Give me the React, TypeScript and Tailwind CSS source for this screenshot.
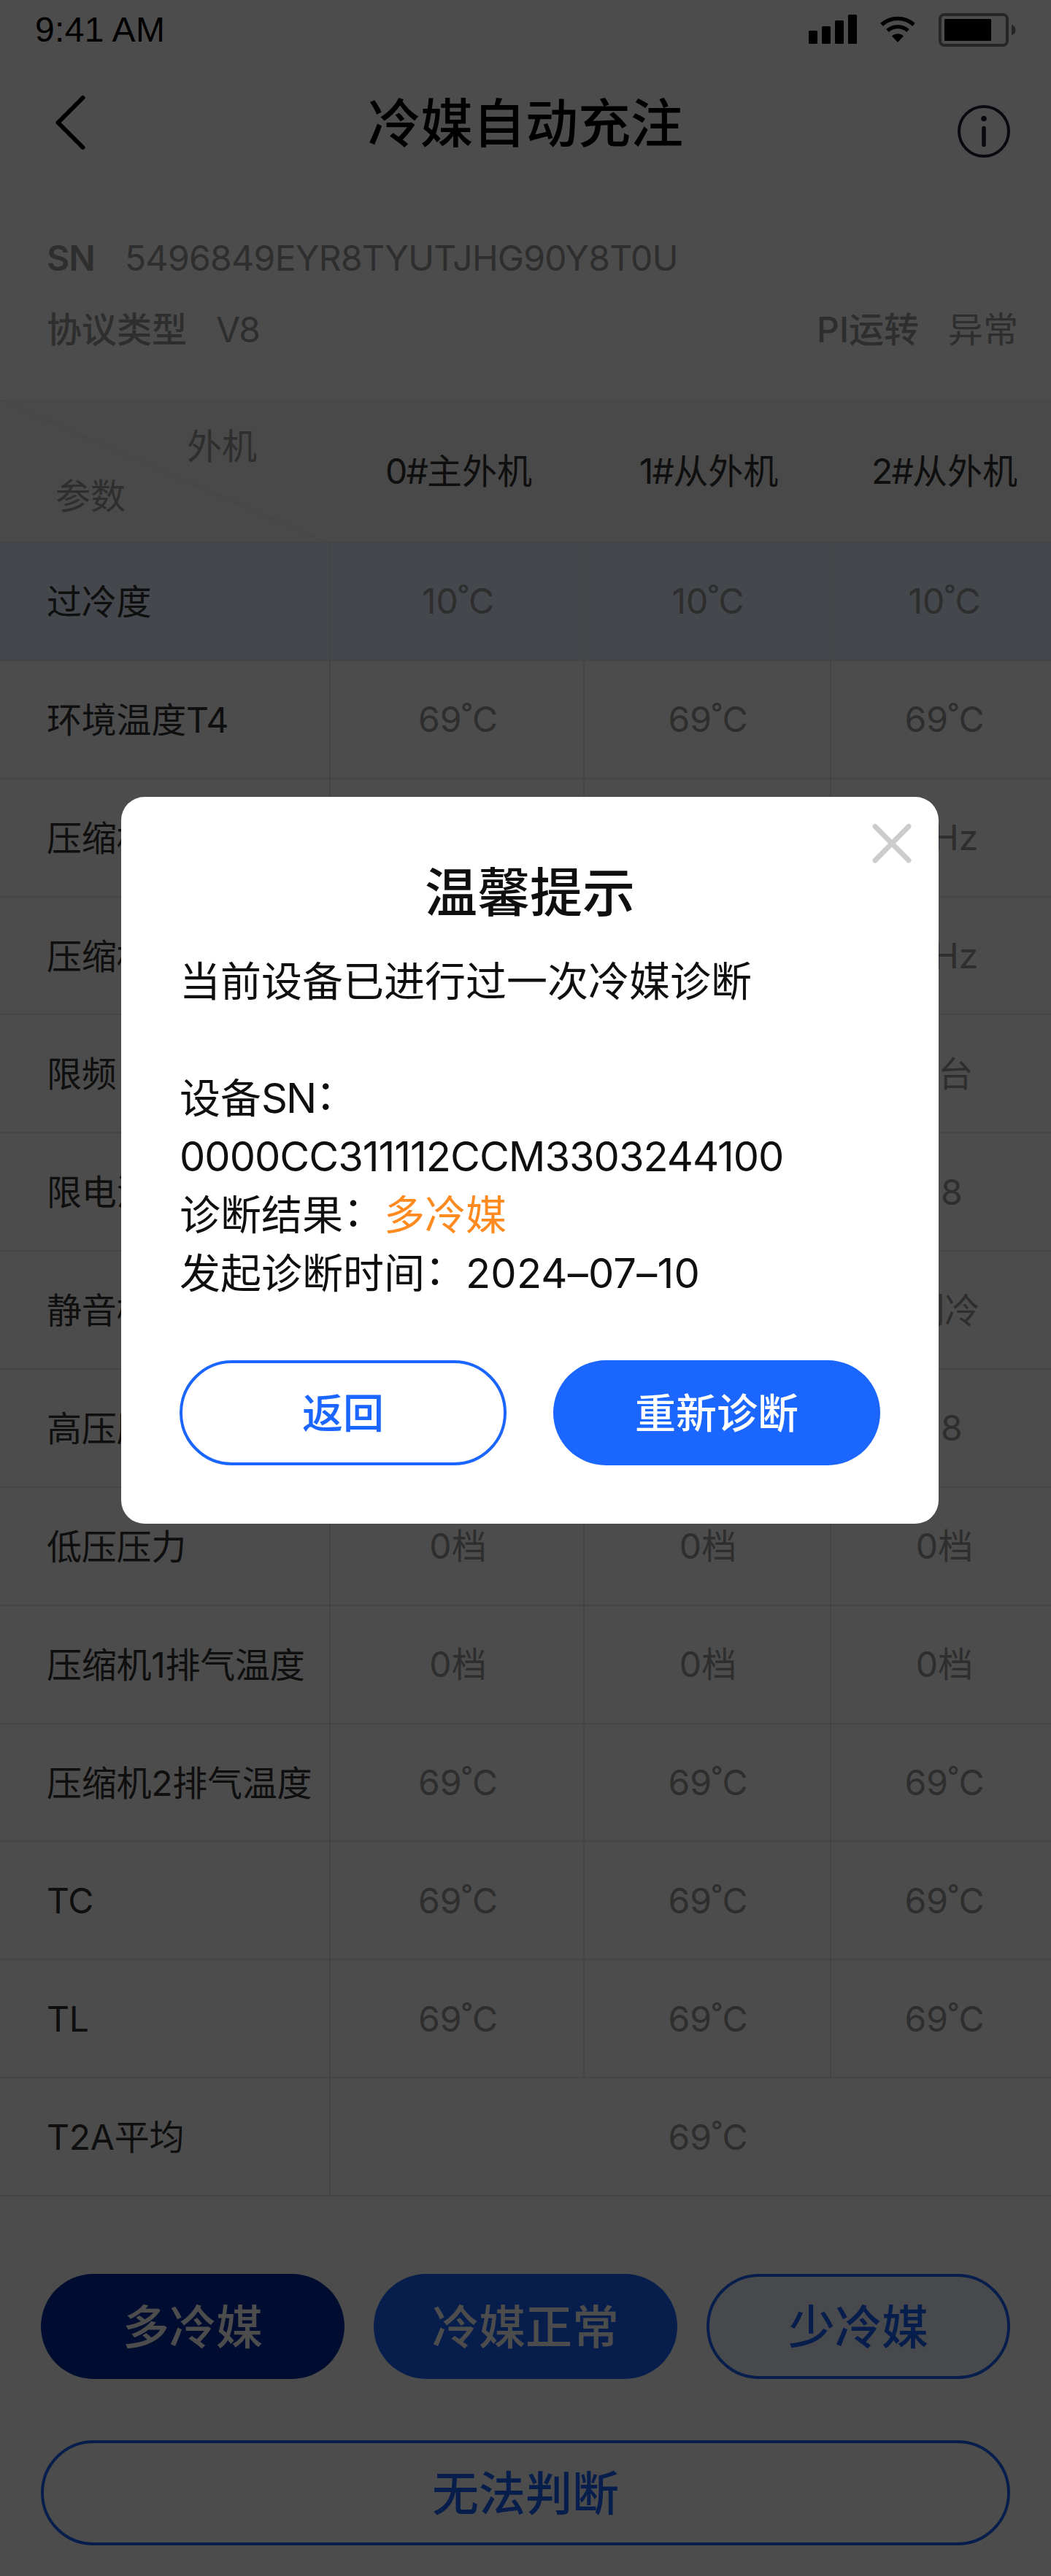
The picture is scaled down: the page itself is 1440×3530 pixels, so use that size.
import React from "react";

type Row = { label: string; values: string[]; merged?: boolean; active?: boolean };

const rows: Row[] = [
  { label: "过冷度", values: ["10˚C", "10˚C", "10˚C"], active: true },
  { label: "环境温度T4", values: ["69˚C", "69˚C", "69˚C"] },
  { label: "压缩机", values: ["", "", "0Hz"] },
  { label: "压缩机", values: ["", "", "0Hz"] },
  { label: "限频", values: ["", "", "0台"] },
  { label: "限电流", values: ["", "", "18"] },
  { label: "静音模", values: ["", "", "制冷"] },
  { label: "高压压", values: ["", "", "18"] },
  { label: "低压压力", values: ["0档", "0档", "0档"] },
  { label: "压缩机1排气温度", values: ["0档", "0档", "0档"] },
  { label: "压缩机2排气温度", values: ["69˚C", "69˚C", "69˚C"] },
  { label: "TC", values: ["69˚C", "69˚C", "69˚C"] },
  { label: "TL", values: ["69˚C", "69˚C", "69˚C"] },
  { label: "T2A平均", values: ["69˚C"], merged: true },
];

const COLS = "grid grid-cols-[453px_348px_338px_301px]";
const CELL_PAD = ["pl-[3px]", "pl-[2px]", "pl-[9px]"];

function StatusBar() {
  return (
    <div className="flex h-[82px] items-center justify-between pl-12 pr-12">
      <span className="font-['Liberation_Sans'] text-[48px] leading-[82px] tracking-[0.3px] text-black">9:41 AM</span>
      <svg width="284" height="82" viewBox="1108 0 284 82" fill="#000">
        <rect x="1108" y="42" width="12" height="18" rx="1.500" />
        <rect x="1126" y="36" width="12" height="24" rx="1.500" />
        <rect x="1144" y="28" width="12" height="32" rx="1.500" />
        <rect x="1162" y="20" width="12" height="40" rx="1.500" />
        <path d="M1208 33.800a33 33 0 0 1 44 0" fill="none" stroke="#000" strokeWidth="5.400" />
        <path d="M1216 42a21 21 0 0 1 28 0" fill="none" stroke="#000" strokeWidth="5.400" />
        <path d="M1230 58l-8-8.400a11.500 11.500 0 0 1 16 0z" />
        <rect x="1288" y="20" width="92" height="42" rx="6" fill="none" stroke="#7f7f7f" strokeWidth="4" />
        <rect x="1294" y="26" width="64" height="30" rx="1.500" />
        <path d="M1386 34a7.200 7.200 0 0 1 0 14z" fill="#7f7f7f" />
      </svg>
    </div>
  );
}

function NavBar() {
  return (
    <div className="grid h-[172px] grid-cols-[1fr_auto_1fr] px-14">
      <svg width="80" height="172" viewBox="56 82 80 172" fill="none" stroke="#000" strokeWidth="6" strokeLinecap="round" strokeLinejoin="round">
        <path d="M113.500 134L79.500 168L113.500 202" />
      </svg>
      <h1 className="text-[72px] font-medium leading-[174px] text-black">冷媒自动充注</h1>
      <svg className="justify-self-end" width="72" height="172" viewBox="1312 82 72 172" fill="none" stroke="#1f2433">
        <circle cx="1348" cy="180" r="34" strokeWidth="4" />
        <path d="M1348 175.500V198.500" strokeWidth="5.500" strokeLinecap="round" />
        <circle cx="1348" cy="162.500" r="3.800" fill="#1f2433" stroke="none" />
      </svg>
    </div>
  );
}

function DeviceInfo() {
  return (
    <div className="flex h-[294px] flex-col pl-16 pr-[45px] pt-[51px] text-[48px] leading-[98px] text-[#999]">
      <div className="flex">
        <span className="w-[107px] font-semibold tracking-[-1px]">SN</span>
        <span className="tracking-[-0.65px]">5496849EYR8TYUTJHG90Y8T0U</span>
      </div>
      <div className="flex justify-between">
        <div className="flex gap-10">
          <span className="font-medium">协议类型</span>
          <span className="tracking-[-2px]">V8</span>
        </div>
        <div className="flex gap-10">
          <span className="font-medium">PI运转</span>
          <span>异常</span>
        </div>
      </div>
    </div>
  );
}

function ParamTable() {
  return (
    <div className="text-[48px] leading-[72px]">
      <div className={COLS + " h-[196px] border-b-2 border-[#e6e6e6] bg-[#f5f5f5]"}>
        <div className="relative flex flex-col text-[#999]">
          <svg className="absolute left-0 top-0" width="449" height="196" fill="none">
            <path d="M0 0L449 196" stroke="#ebebeb" strokeWidth="2" />
          </svg>
          <span className="pl-64 pt-[28px] leading-[72px]">外机</span>
          <span className="-mt-1 pl-[76px] leading-[72px]">参数</span>
        </div>
        {["0#主外机", "1#从外机", "2#从外机"].map((h, i) => (
          <div key={h} className={"flex items-center justify-center text-[#333] " + CELL_PAD[i]}>
            <span className="whitespace-nowrap pt-[2px]">
              <span className="tracking-[-1.8px]">{h.slice(0, 2)}</span>
              {h.slice(2)}
            </span>
          </div>
        ))}
      </div>
      {rows.map((row, r) => (
        <div
          key={r}
          className={COLS + " h-[161.86px] border-b-2 border-[#e6e6e6] " + (row.active ? "bg-[#e3edfa]" : "bg-white")}
        >
          <div className="flex items-center border-r-2 border-[#e6e6e6] pl-16 pt-[2px] tracking-[-0.25px] text-[#333]">
            <span className="whitespace-nowrap">{row.label}</span>
          </div>
          {row.merged ? (
            <div className="col-span-3 flex items-center justify-center pl-[47px] pt-[1px] text-[#999]">{row.values[0]}</div>
          ) : (
            row.values.map((v, i) => (
              <div
                key={i}
                className={
                  "flex items-center justify-center pt-[1px] text-[#999] " +
                  CELL_PAD[i] +
                  (i === 2 ? "" : " border-r-2 border-[#e6e6e6]")
                }
              >
                {v}
              </div>
            ))
          )}
        </div>
      ))}
    </div>
  );
}

function Actions() {
  const base = "flex h-36 items-center justify-center rounded-full pt-[2px] text-[64px] font-medium leading-none";
  return (
    <div className="px-14 pt-[106px]">
      <div className="grid grid-cols-3 gap-10">
        <button className={base + " bg-[#002ba0] text-white"}>多冷媒</button>
        <button className={base + " bg-[#1a66ff] text-white"}>冷媒正常</button>
        <button className={base + " border-4 border-[#1a66ff] bg-[#edf3ff] text-[#1a66ff]"}>少冷媒</button>
      </div>
      <button className={base + " mt-[84px] w-full border-4 border-[#1a66ff] text-[#1a66ff]"}>无法判断</button>
    </div>
  );
}

function Colon() {
  return <span className="inline-block -translate-y-[5px]">：</span>;
}

function Dialog() {
  const base = "flex h-36 items-center justify-center rounded-full pt-[1px] text-[56px] font-medium leading-none";
  return (
    <div className="absolute left-[166px] top-[1092px] flex h-[996px] w-[1120px] flex-col rounded-[32px] bg-white px-20 pb-20 text-[#0f0f0f]">
      <svg className="absolute right-[37px] top-[36px]" width="54" height="56" viewBox="0 0 54 56" stroke="#ccc" strokeWidth="7" strokeLinecap="round">
        <path d="M4 4.500L50 51M50 4.500L4 51" />
      </svg>
      <h2 className="mt-[81px] text-center text-[72px] font-medium leading-[100px]">温馨提示</h2>
      <div className="mt-[32px] whitespace-nowrap text-[56px] leading-[80px]">
        <p>当前设备已进行过一次冷媒诊断</p>
        <p>&nbsp;</p>
        <p>
          设备<span className="tracking-[-2px]">SN</span>
          <Colon />
        </p>
        <p className="tracking-[-1px]">0000CC311112CCM3303244100</p>
        <p>
          诊断结果
          <Colon />
          <span className="text-[#ff8a1f]">多冷媒</span>
        </p>
        <p>
          发起诊断时间
          <Colon />
          <span className="tracking-[0.2px]">2024–07–10</span>
        </p>
      </div>
      <div className="mt-auto grid grid-cols-2 gap-16">
        <button className={base + " border-4 border-[#1a66ff] text-[#1a66ff]"}>返回</button>
        <button className={base + " bg-[#1a66ff] text-white"}>重新诊断</button>
      </div>
    </div>
  );
}

export default function App() {
  return (
    <div className="relative h-[3530px] w-[1440px] overflow-hidden bg-white font-['Inter','Noto_Sans_CJK_SC',sans-serif]">
      <StatusBar />
      <NavBar />
      <DeviceInfo />
      <ParamTable />
      <Actions />
      <div className="absolute inset-0 bg-black/70" />
      <Dialog />
    </div>
  );
}
